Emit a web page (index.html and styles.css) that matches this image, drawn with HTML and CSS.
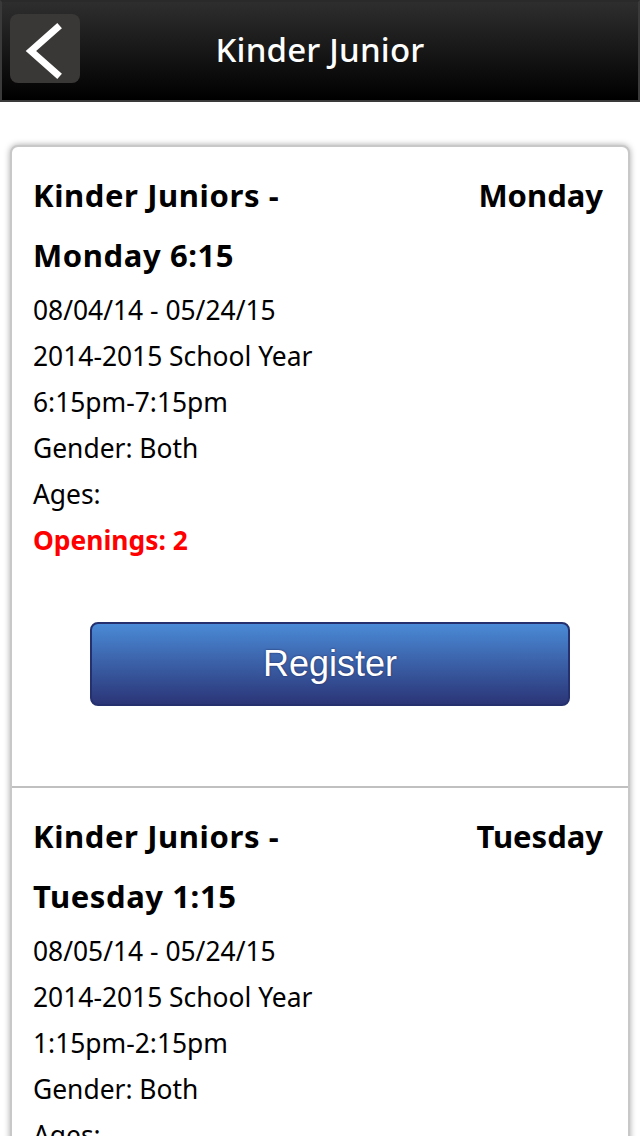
FILE: index.html
```html
<!DOCTYPE html>
<html lang="en">
<head>
  <meta charset="UTF-8">
  <title>Kinder Junior</title>
  <link rel="stylesheet" href="styles.css">
</head>
<body>

  <div class="topbar">
    <a class="back" href="#">
      <svg width="70" height="69" viewBox="0 0 70 69">
        <polyline points="47,14 21,37 47,60" fill="none" stroke="#fff" stroke-width="7" stroke-linecap="square" stroke-linejoin="miter"/>
      </svg>
    </a>
    <h1>Kinder Junior</h1>
  </div>

  <div class="card">

    <!-- Monday class -->
    <div class="session">
      <div class="session-head">
        <div class="session-title">Kinder Juniors - Monday 6:15</div>
        <div class="session-day">Monday</div>
      </div>
      <div class="info">08/04/14 - 05/24/15</div>
      <div class="info">2014-2015 School Year</div>
      <div class="info">6:15pm-7:15pm</div>
      <div class="info">Gender: Both</div>
      <div class="info">Ages:</div>
      <div class="info openings">Openings: 2</div>
      <button class="register">Register</button>
    </div>

    <!-- Tuesday class -->
    <div class="session">
      <div class="session-head">
        <div class="session-title">Kinder Juniors - Tuesday 1:15</div>
        <div class="session-day">Tuesday</div>
      </div>
      <div class="info">08/05/14 - 05/24/15</div>
      <div class="info">2014-2015 School Year</div>
      <div class="info">1:15pm-2:15pm</div>
      <div class="info">Gender: Both</div>
      <div class="info">Ages:</div>
      <div class="info openings">Openings: 3</div>
      <button class="register">Register</button>
    </div>

  </div>

</body>
</html>
```

FILE: styles.css
```css
body {
  margin: 0;
  background: #fff;
  font-family: "Noto Sans", "Open Sans", sans-serif;
  color: #000;
}
.topbar {
  height: 98px;
  display: flex;
  align-items: center;
  justify-content: center;
  position: relative;
  background: linear-gradient(#2e2e2e, #000);
  border: 2px solid #3a3a3a;
  border-top-color: #2a2a2a;
}
.topbar h1 {
  margin: 0 0 4px;
  color: #fff;
  font-size: 33px;
  font-weight: 500;
  letter-spacing: 0.2px;
}
.back {
  position: absolute;
  left: 8px;
  top: 12px;
  width: 70px;
  height: 69px;
  border-radius: 8px;
  background: #3a3836;
  display: flex;
}
.card {
  margin: 43px 10px 0;
  border: 2px solid #c8c8c8;
  border-radius: 8px;
  box-shadow: 0 0 6px rgba(0, 0, 0, 0.35);
  background: #fff;
}
.session {
  padding: 18px 25px 80px 21px;
  display: flex;
  flex-direction: column;
}
.session + .session {
  border-top: 2px solid #c0c0c0;
}
.session-head {
  display: flex;
  justify-content: space-between;
  margin-bottom: 2px;
}
.session-title,
.session-day {
  font-size: 31px;
  font-weight: bold;
  line-height: 60px;
}
.session-title {
  width: 300px;
  letter-spacing: 0.6px;
}
.info {
  font-size: 26.4px;
  line-height: 46px;
}
.openings {
  color: #ff0000;
  font-weight: bold;
}
.register {
  align-self: flex-start;
  margin: 59px 0 0 57px;
  width: 480px;
  height: 84px;
  border: 2px solid #25306e;
  border-radius: 8px;
  background: linear-gradient(#4a8ad6, #2b3577);
  color: #fff;
  font-family: "Liberation Sans", Arial, sans-serif;
  font-size: 36px;
  text-shadow: 0 0 2px #1d2656;
  cursor: pointer;
}
```
